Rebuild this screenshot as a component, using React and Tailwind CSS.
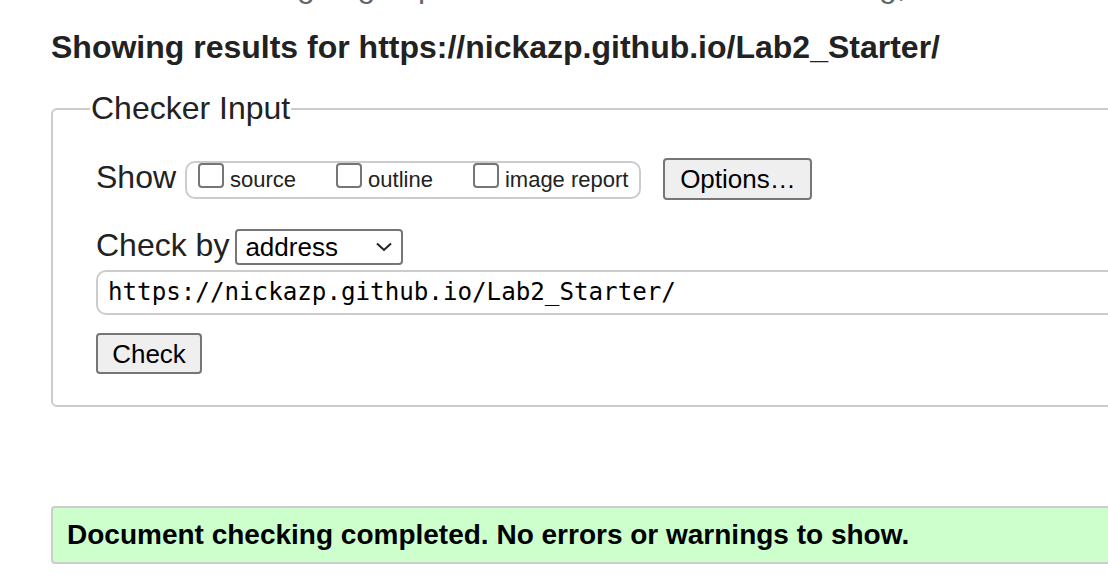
import React from 'react';

const Box = ({ label, className = '' }) => (
  <label className={`flex items-start ${className}`}>
    <span className="w-[26px] h-[25px] rounded-[4px] border-2 border-[#767676] bg-white" />
    <span className="ml-[6px] mt-[6px] text-[22px] leading-[22px]">{label}</span>
  </label>
);

const App = () => {
  return (
    <div className="w-full min-h-screen overflow-hidden bg-white text-[#222] font-['Liberation_Sans',Arial,sans-serif]">
      <p className="-mt-[30px] pl-[55px] text-[32px] leading-[32px] text-[#666] whitespace-nowrap">
        This tool is an ongoing experiment in better HTML checking,
      </p>

      <h2 className="mt-[29px] pl-[51px] text-[32px] leading-[32px] font-bold whitespace-nowrap">
        Showing results for https://nickazp.github.io/Lab2_Starter/
      </h2>

      <fieldset className="mt-[27px] ml-[51px] w-[1100px] border-2 border-[#ccc] rounded-[6px] pl-[43px] pt-[31px] pb-[31px]">
        <legend className="-ml-[6px] px-[1px] text-[32px] leading-[37px]">Checker Input</legend>

        <div className="flex items-start">
          <span className="mt-[3px] text-[32px] leading-[32px]">Show</span>
          <div className="ml-[9px] mt-[3px] h-[38px] flex items-start border-2 border-[#ccc] rounded-[10px] px-[11px]">
            <Box label="source" />
            <Box label="outline" className="ml-[40px]" />
            <Box label="image report" className="ml-[40px]" />
          </div>
          <button className="ml-[22px] w-[149px] h-[42px] bg-[#efefef] border-2 border-[#767676] rounded-[4px] text-[26px] text-black">
            Options…
          </button>
        </div>

        <div className="mt-[29px] flex items-start">
          <span className="text-[32px] leading-[32px]">Check by</span>
          <div className="ml-[6px] w-[168px] h-[36px] flex items-center justify-between border-2 border-[#767676] rounded-[4px] pl-[8px] pr-[9px] text-[26px] text-black">
            <span>address</span>
            <svg width="16" height="10" viewBox="0 0 16 10" fill="none" stroke="#222" strokeWidth="2">
              <polyline points="1,1.5 8,8 15,1.5" />
            </svg>
          </div>
        </div>

        <div className="mt-[5px] h-[45px] flex items-center border-2 border-[#ccc] rounded-[10px] pl-[10px] font-['DejaVu_Sans_Mono',monospace] text-[24.2px] text-black">
          https://nickazp.github.io/Lab2_Starter/
        </div>

        <button className="mt-[18px] w-[106px] h-[41px] bg-[#efefef] border-2 border-[#767676] rounded-[4px] text-[26px] text-black">
          Check
        </button>
      </fieldset>

      <div className="mt-[99px] ml-[51px] w-[1100px] h-[58px] flex items-center bg-[#ccffcc] border-2 border-[#ccc] rounded-[4px] pl-[14px]">
        <span className="text-[28px] font-bold text-black whitespace-nowrap">
          Document checking completed. No errors or warnings to show.
        </span>
      </div>
    </div>
  );
};

export default App;
